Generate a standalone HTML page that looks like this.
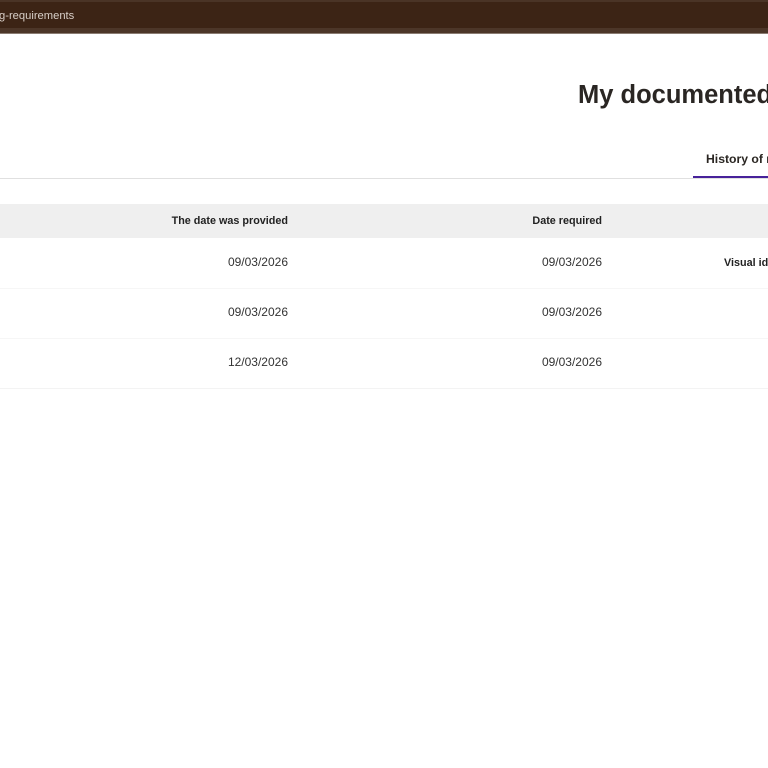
<!DOCTYPE html>
<html>
<head>
<meta charset="utf-8">
<style>
html,body{margin:0;padding:0;width:768px;height:768px;overflow:hidden;background:#fff;font-family:"Liberation Sans",sans-serif;}
div{position:absolute;white-space:nowrap;}
.r{text-align:right;}
.d{font-size:12px;color:#333;line-height:14px;}
.h{font-size:10.8px;font-weight:bold;color:#222;line-height:14px;}
</style>
</head>
<body>
<div style="left:0;top:0;width:768px;height:28px;background:#3c2415;"></div>
<div style="left:0;top:0;width:768px;height:2px;background:#4a3426;"></div>
<div style="left:0;top:28px;width:768px;height:5px;background:#4c3628;"></div>
<div style="left:0;top:33px;width:768px;height:1px;background:#8a7c72;"></div>
<div style="left:-1px;top:9px;font-size:11.2px;color:#d8cfc8;line-height:14px;">g-requirements</div>

<div style="left:578px;top:79px;font-size:25.5px;font-weight:bold;color:#2a2623;line-height:32px;">My documented</div>

<div style="left:706px;top:151px;font-size:12.2px;font-weight:bold;color:#2a2622;line-height:16px;">History of r</div>
<div style="left:0;top:178px;width:768px;height:1px;background:#e0e0e0;"></div>
<div style="left:693px;top:176px;width:75px;height:2px;background:#47229a;"></div>

<div style="left:0;top:204px;width:768px;height:34px;background:#efefef;"></div>
<div class="h r" style="right:480px;top:214px;">The date was provided</div>
<div class="h r" style="right:166px;top:214px;">Date required</div>

<div class="d r" style="right:480px;top:255px;">09/03/2026</div>
<div class="d r" style="right:166px;top:255px;">09/03/2026</div>
<div class="h" style="left:724px;top:256px;">Visual ide</div>
<div style="left:0;top:288px;width:768px;height:1px;background:#f6f6f6;"></div>

<div class="d r" style="right:480px;top:305px;">09/03/2026</div>
<div class="d r" style="right:166px;top:305px;">09/03/2026</div>
<div style="left:0;top:338px;width:768px;height:1px;background:#f6f6f6;"></div>

<div class="d r" style="right:480px;top:355px;">12/03/2026</div>
<div class="d r" style="right:166px;top:355px;">09/03/2026</div>
<div style="left:0;top:388px;width:768px;height:1px;background:#f3f3f3;"></div>
</body>
</html>
